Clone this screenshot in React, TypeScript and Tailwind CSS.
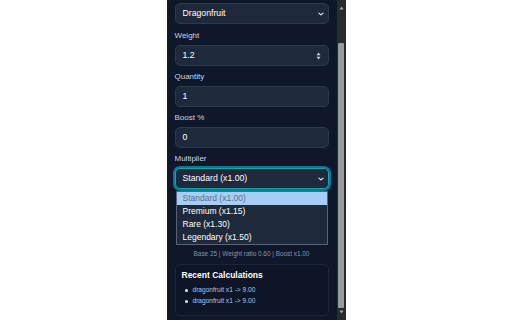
import React from 'react';

function Chevron() {
  return (
    <svg viewBox="0 0 10 6" className="w-[6px] h-[4px]" fill="none" stroke="currentColor" strokeWidth="2" strokeLinecap="round" strokeLinejoin="round">
      <path d="M1.5 1.5 5 4.5l3.5-3" />
    </svg>
  );
}

function Spinner() {
  return (
    <svg viewBox="0 0 6 10" className="w-[5px] h-[8px]" fill="currentColor">
      <path d="M3 0.5 5.5 4h-5z" />
      <path d="M3 9.5 5.5 6h-5z" />
    </svg>
  );
}

const label = 'block text-[8px] leading-[11px] text-[#cbd5e1] mt-[5px] mb-[4px]';
const field =
  'h-[21px] rounded-[5px] bg-[#1e293b] border border-[#2c3a50] flex items-center justify-between pl-[7px] pr-[4px] text-[8.7px] text-white';

export default function App() {
  const recent = ['dragonfruit x1 -> 9.00', 'dragonfruit x1 -> 9.00'];

  return (
    <div className="w-full h-[320px] bg-white flex justify-center font-['Liberation_Sans',Arial,sans-serif]">
      <div className="w-[179px] h-full bg-[#0f172a] flex overflow-hidden">
        {/* content */}
        <div className="relative w-[170px] px-2 pt-[3px]">
          <div className={field}>
            <span>Dragonfruit</span>
            <span className="text-[#e2e8f0]"><Chevron /></span>
          </div>

          <span className={`${label} !mt-[6px]`}>Weight</span>
          <div className={field}>
            <span>1.2</span>
            <span className="text-[#cbd5e1] pr-[3px]"><Spinner /></span>
          </div>

          <span className={label}>Quantity</span>
          <div className={field}>
            <span>1</span>
          </div>

          <span className={label}>Boost %</span>
          <div className={field}>
            <span>0</span>
          </div>

          <span className={label}>Multiplier</span>
          <div className="relative">
            <div className="h-[21px] rounded-[5px] bg-[#1e293b] border border-[#0ea5b7] ring-2 ring-[#0891b2]/80 flex items-center justify-between pl-[7px] pr-[4px] text-[8.7px] text-white">
              <span>Standard (x1.00)</span>
              <span className="text-[#e2e8f0]"><Chevron /></span>
            </div>
            {/* open option list */}
            <div className="absolute left-[1px] right-[1px] top-[23px] bg-[#1e293b] border border-[#5b6270] text-[8.5px] leading-[13px] text-white z-10">
              <div className="bg-[#a6cdf6] text-[#5d6f86] pl-[6px]">Standard (x1.00)</div>
              <div className="pl-[6px]">Premium (x1.15)</div>
              <div className="pl-[6px]">Rare (x1.30)</div>
              <div className="pl-[6px]">Legendary (x1.50)</div>
            </div>
          </div>

          <p className="mt-[60px] text-center text-[6.4px] leading-[10px] text-[#8594ab]">
            Base 25 | Weight ratio 0.60 | Boost x1.00
          </p>

          <div className="mt-[5px] h-[52px] rounded-[5px] border border-[#1c2638] bg-[#0d1526] px-[6px] pt-[5px]">
            <h3 className="text-[8.5px] leading-[11px] font-bold text-white">Recent Calculations</h3>
            <ul className="mt-[4px] space-y-[1px]">
              {recent.map((r, i) => (
                <li key={i} className="flex items-center gap-[5px] pl-[3px] text-[6.6px] leading-[10px] text-[#a9c6ee]">
                  <span className="w-[3px] h-[3px] rounded-full bg-[#e2e8f0]" />
                  {r}
                </li>
              ))}
            </ul>
          </div>
        </div>

        {/* scrollbar */}
        <div className="w-[9px] h-full bg-[#2b2b2b] flex flex-col items-center">
          <svg viewBox="0 0 8 6" className="w-[5px] h-[4px] mt-[6px] text-[#a3a3a3]" fill="currentColor">
            <path d="M4 0.5 7.5 5.5h-7z" />
          </svg>
          <div className="w-[6px] flex-1 mt-[33px] mb-[2px] rounded-[1px] bg-[#9b9b9b]" />
          <svg viewBox="0 0 8 6" className="w-[5px] h-[4px] mb-[6px] text-[#a3a3a3]" fill="currentColor">
            <path d="M4 5.5 7.5 0.5h-7z" />
          </svg>
        </div>
      </div>
    </div>
  );
}
